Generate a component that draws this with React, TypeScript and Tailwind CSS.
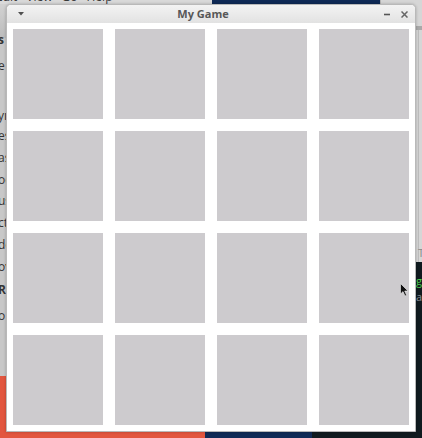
import React from "react";

const sideItems = [
  { t: "s", y: 45, bold: true },
  { t: "e", y: 71 },
  { t: "yı", y: 121 },
  { t: "es", y: 141 },
  { t: "as", y: 163 },
  { t: "oc", y: 185 },
  { t: "us", y: 206 },
  { t: "ct", y: 228 },
  { t: "de", y: 250 },
  { t: "ov", y: 272 },
  { t: "R", y: 295, bold: true },
  { t: "o", y: 321 },
];

function Tile() {
  return <div className="w-[90px] h-[90px] bg-[#cdcbce]" />;
}

export default function App() {
  const tiles = Array.from({ length: 16 });
  return (
    <div
      className="relative w-[422px] h-[438px] overflow-hidden bg-[#0f2a56]"
      style={{ fontFamily: '"Open Sans", "DejaVu Sans", sans-serif' }}
    >
      {/* desktop wallpaper strip */}
      <div className="absolute left-0 top-[376px] w-[205px] h-[62px] bg-[#e2563f]" />

      {/* terminal window behind, right */}
      <div className="absolute left-[312px] top-[262px] w-[120px] h-[180px] bg-[#101a1f] text-[11px] leading-[14px]">
        <div className="absolute left-[104px] top-[12px] text-[#4ed04e]">g</div>
        <div className="absolute left-[104px] top-[28px] text-[#8a9094]">ar</div>
      </div>

      {/* gray app behind, right */}
      <div className="absolute left-[380px] top-[-10px] w-[60px] h-[272px] bg-[#d6d6d6] border-l border-[#b5b5b5] text-[11px] leading-[14px]">
        <div className="mt-[36px] h-[4px] bg-[#a9a9a9]" />
        <div className="absolute left-[37px] top-[40px] w-[1px] h-[232px] bg-[#bdbdbd]" />
        <div className="absolute left-[37px] top-[256px] text-[#8a8a8a]">Te</div>
      </div>

      {/* file manager behind, left */}
      <div className="absolute left-[-60px] top-[-12px] w-[272px] h-[388px] bg-[#c8c8c8]">
        <div className="flex h-[16px] items-end gap-[9px] pl-[56px] bg-[#d9d9d9] text-[12px] leading-[14px] text-[#3a3a3a]">
          <span>Edit</span>
          <span>View</span>
          <span>Go</span>
          <span>Help</span>
        </div>
        <div className="h-[34px] bg-gradient-to-b from-[#d2d2d2] to-[#bcbcbc]" />
        {sideItems.map((s, i) => (
          <div
            key={i}
            className={`absolute left-[58px] text-[12px] leading-[14px] text-[#353535] ${s.bold ? "font-bold" : ""}`}
            style={{ top: s.y }}
          >
            {s.t}
          </div>
        ))}
      </div>

      {/* game window */}
      <div className="absolute left-[6px] top-[4px] w-[410px] h-[428px] flex flex-col border border-[#b9b9b9] rounded-t-[5px] bg-white shadow-[0_0_3px_rgba(0,0,0,0.25)]">
        <div className="flex h-[18px] items-center rounded-t-[4px] bg-gradient-to-b from-[#f3f3f3] to-[#e2e2e2]">
          <div className="w-[24px] flex justify-center pl-[4px]">
            <svg width="6" height="4" viewBox="0 0 6 4">
              <path d="M0 0 L6 0 L3 3.5 Z" fill="#505050" />
            </svg>
          </div>
          <div className="flex-1 text-center text-[11px] font-bold text-[#575757] leading-[18px]">
            My Game
          </div>
          <div className="w-[40px] flex items-center justify-end gap-[11px] pr-[7px]">
            <svg width="6" height="7" viewBox="0 0 6 7">
              <path d="M0 3.5 H6" stroke="#555" strokeWidth="1.6" />
            </svg>
            <svg width="7" height="7" viewBox="0 0 7 7">
              <path d="M0.5 0.5 L6.5 6.5 M6.5 0.5 L0.5 6.5" stroke="#666" strokeWidth="1.5" />
            </svg>
          </div>
        </div>
        <div className="flex-1 p-[6px]">
          <div className="grid grid-cols-4 gap-[12px]">
            {tiles.map((_, i) => (
              <Tile key={i} />
            ))}
          </div>
        </div>
      </div>

      {/* mouse cursor */}
      <svg className="absolute left-[400px] top-[283px]" width="9" height="14" viewBox="0 0 9 14">
        <path d="M0.5 0.5 L0.5 11 L3 8.6 L5 13 L6.6 12.3 L4.7 8 L8 8 Z" fill="#111" stroke="#f0f0f0" strokeWidth="0.6" />
      </svg>
    </div>
  );
}
